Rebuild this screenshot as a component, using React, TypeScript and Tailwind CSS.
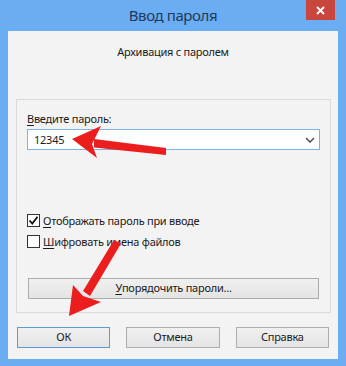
import React from "react";

const font = { fontFamily: '"Noto Sans", "Open Sans", sans-serif' };

function U({ c }: { c: string }) {
  return <span className="underline underline-offset-2 decoration-1">{c}</span>;
}

function Btn({ children, def }: { children: React.ReactNode; def?: boolean }) {
  return (
    <div
      className={`h-[21px] flex items-center justify-center text-[11px] tracking-[-0.25px] text-[#1a1a1a] bg-gradient-to-b from-[#f0f0f0] to-[#e4e4e4] border ${
        def ? "border-[#5b9bd8]" : "border-[#acacac]"
      }`}
    >
      {children}
    </div>
  );
}

export default function App() {
  return (
    <div
      className="relative w-[346px] h-[366px] bg-[#6badf3] flex flex-col px-[8px] pb-[7px] overflow-hidden"
      style={font}
    >
      <div className="relative h-[31px] flex items-center justify-center">
        <span className="text-[15px] tracking-[-0.4px] text-[#1f3a5c] leading-none -mt-[1px]">
          Ввод пароля
        </span>
        <div className="absolute right-[3px] top-0 w-[29px] h-[20px] bg-[#c9463f] flex items-center justify-center">
          <svg width="9" height="9" viewBox="0 0 9 9">
            <path d="M1 1 L8 8 M8 1 L1 8" stroke="#fff" strokeWidth="1.8" />
          </svg>
        </div>
      </div>
      <div className="flex-1 bg-[#f3f3f3] flex flex-col text-[11px] tracking-[-0.25px] text-[#1a1a1a]">
        <div className="pt-[13px] h-[68px] text-center leading-[16px]">Архивация с паролем</div>
        <div className="ml-[8px] mr-[7px] h-[214px] border border-[#dadada] flex flex-col px-[10px]">
          <div className="mt-[11px] leading-[16px]">
            <U c="В" />ведите пароль:
          </div>
          <div className="mt-[2px] h-[21px] border border-[#7db2e6] bg-white flex items-center pl-[6px] pr-[4px]">
            <span className="flex-1 leading-none">12345</span>
            <svg width="10" height="6" viewBox="0 0 10 6">
              <path d="M1 1 L5 5 L9 1" stroke="#555" strokeWidth="1.6" fill="none" />
            </svg>
          </div>
          <div className="mt-[63px] flex items-center h-[14px]">
            <div className="w-[13px] h-[13px] border border-[#333] bg-white flex items-center justify-center">
              <svg width="11" height="11" viewBox="0 0 11 11">
                <path d="M1.5 5.5 L4.3 8.6 L9.5 1.8" stroke="#111" strokeWidth="1.8" fill="none" />
              </svg>
            </div>
            <span className="ml-[3px] leading-none">
              <U c="О" />тображать пароль при вводе
            </span>
          </div>
          <div className="mt-[7px] flex items-center h-[14px]">
            <div className="w-[13px] h-[13px] border border-[#333] bg-white" />
            <span className="ml-[3px] leading-none">
              <U c="Ш" />ифровать имена файлов
            </span>
          </div>
          <div className="mt-[30px] ml-[1px] mr-[1px]">
            <Btn>
              <U c="У" />порядочить пароли...
            </Btn>
          </div>
        </div>
        <div className="mt-[14px] ml-[9px] mr-[9px] grid grid-cols-3 gap-[16px]">
          <Btn def>ОК</Btn>
          <Btn>Отмена</Btn>
          <Btn>Справка</Btn>
        </div>
      </div>
      <svg
        className="absolute left-0 top-0 pointer-events-none"
        width="346"
        height="366"
        viewBox="0 0 346 366"
      >
        <g fill="#ec1d1d">
          <polygon points="94,139 166,148 166,155 94,147.5" />
          <polygon points="72,139 101,126 92,144 97,158" />
          <polygon points="83,291 114,240 121,243.5 90,296" />
          <polygon points="69,316 73,285 83,296 101,302" />
        </g>
      </svg>
    </div>
  );
}
